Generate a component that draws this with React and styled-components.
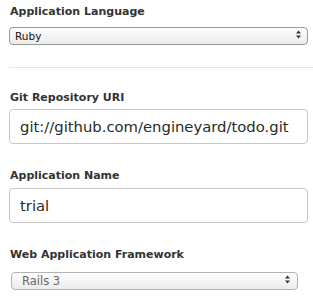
import React from 'react';
import styled, { createGlobalStyle } from 'styled-components';

const Global = createGlobalStyle`
  body {
    margin: 0;
    background: #fff;
    font-family: "DejaVu Sans", "Liberation Sans", sans-serif;
  }
`;

const Form = styled.form`
  padding: 4px 5px 0 9px;
`;

const Field = styled.div`
  display: flex;
  flex-direction: column;
  margin-bottom: ${p => p.gap || 0}px;
`;

const Label = styled.label`
  font-size: 11px;
  font-weight: bold;
  color: #333;
  padding-left: 1px;
  line-height: 15px;
  margin-bottom: ${p => p.space || 6}px;
`;

const SelectWrap = styled.div`
  position: relative;
  width: ${p => p.width}px;
  margin-left: ${p => p.indent || 0}px;
`;

const Select = styled.select`
  appearance: none;
  width: 100%;
  height: 18px;
  box-sizing: border-box;
  border: 1px solid ${p => (p.muted ? '#b3b3b3' : '#9a9a9a')};
  border-radius: 4px;
  background: linear-gradient(#fdfdfd, #ececec);
  font-family: "DejaVu Sans", "Liberation Sans", sans-serif;
  font-size: ${p => (p.muted ? '11.5px' : '10.5px')};
  color: ${p => (p.muted ? '#666' : '#111')};
  padding: 0 0 0 ${p => (p.muted ? 10 : 5)}px;
  outline: none;
`;

const Arrows = styled.svg`
  position: absolute;
  right: ${p => p.right || 6}px;
  top: 5px;
  pointer-events: none;
`;

const Rule = styled.hr`
  border: none;
  border-top: 1px solid #e6e6e6;
  margin: 22px -5px 22px 0;
`;

const Input = styled.input`
  width: 299px;
  height: 35px;
  box-sizing: border-box;
  border: 1px solid #c8c8c8;
  border-radius: 4px;
  padding: 0 10px;
  font-family: "DejaVu Sans", "Liberation Sans", sans-serif;
  font-size: 14.8px;
  color: #2a2a2a;
  outline: none;
`;

function Updown({ right }) {
  return (
    <Arrows width="7" height="9" viewBox="0 0 7 9" right={right}>
      <path d="M3.5 0.5 L6 3.5 H1 Z" fill="#333" />
      <path d="M3.5 8.5 L6 5.5 H1 Z" fill="#333" />
    </Arrows>
  );
}

export default function App() {
  return (
    <>
      <Global />
      <Form>
        <Field>
          <Label space={6}>Application Language</Label>
          <SelectWrap width={299}>
            <Select defaultValue="ruby">
              <option value="ruby">Ruby</option>
            </Select>
            <Updown right={6} />
          </SelectWrap>
        </Field>
        <Rule />
        <Field gap={24}>
          <Label space={4}>Git Repository URI</Label>
          <Input defaultValue="git://github.com/engineyard/todo.git" />
        </Field>
        <Field gap={24}>
          <Label space={5}>Application Name</Label>
          <Input defaultValue="trial" />
        </Field>
        <Field>
          <Label space={8}>Web Application Framework</Label>
          <SelectWrap width={287} indent={2}>
            <Select muted defaultValue="rails3">
              <option value="rails3">Rails 3</option>
            </Select>
            <Updown right={7} />
          </SelectWrap>
        </Field>
      </Form>
    </>
  );
}
